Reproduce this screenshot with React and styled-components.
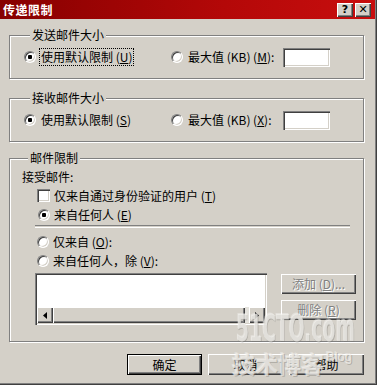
import React from 'react';
import styled, { createGlobalStyle } from 'styled-components';

const GlobalStyle = createGlobalStyle`
  html, body { margin: 0; padding: 0; background: #d4d0c8; }
  body {
    font-family: "Noto Sans CJK SC", "Noto Sans", sans-serif;
    font-size: 12px;
    line-height: 14px;
    color: #000;
  }
`;

const Window = styled.div`
  position: relative;
  width: 377px;
  height: 385px;
  box-sizing: border-box;
  background: #d4d0c8;
  padding-right: 2px;
  padding-bottom: 2px;
  box-shadow: inset -1px -1px 0 #404040, inset -2px -2px 0 #808080;
  overflow: hidden;
`;

const TitleBar = styled.div`
  height: 19px;
  display: flex;
  align-items: center;
  justify-content: space-between;
  padding: 0 4px 0 3px;
  background: linear-gradient(to right, #860000, #b40808 60%, #c80e0e);
`;

const Title = styled.div`
  color: #fff;
  font-weight: bold;
  font-size: 12px;
  letter-spacing: 0.5px;
`;

const TitleButtons = styled.div`
  display: flex;
  gap: 2px;
`;

const TitleButton = styled.div`
  width: 16px;
  height: 14px;
  box-sizing: border-box;
  background: #d4d0c8;
  box-shadow: inset 1px 1px 0 #fff, inset -1px -1px 0 #404040, inset -2px -2px 0 #808080;
  display: flex;
  align-items: center;
  justify-content: center;
  font-family: "DejaVu Sans", sans-serif;
  font-weight: bold;
  font-size: 11px;
  line-height: 1;
`;

const Body = styled.div`
  padding: 16px 11px 0 9px;
`;

const GroupBox = styled.div`
  border: 1px solid #808080;
  box-shadow: inset 1px 1px 0 #fff, 1px 1px 0 #fff;
  margin-top: ${p => p.$mt || 0}px;
  padding: 0 ${p => p.$pr || 0}px ${p => p.$pb}px ${p => p.$pl}px;
`;

const Legend = styled.div`
  width: fit-content;
  margin: -8px 0 0 ${p => p.$ml}px;
  padding: 0 2px;
  height: 14px;
  background: #d4d0c8;
`;

const Row = styled.div`
  display: flex;
  align-items: center;
  height: 20px;
  margin-top: 5px;
`;

const Option = styled.div`
  display: flex;
  align-items: center;
  gap: 4px;
  width: ${p => (p.$w ? `${p.$w}px` : 'auto')};
  height: 19px;
  flex-shrink: 0;
`;

const Label = styled.span`
  white-space: nowrap;
  padding: 1px 1px;
  outline: ${p => (p.$focus ? '1px dotted #000' : 'none')};
`;

const RadioCircle = styled.span`
  width: 12px;
  height: 12px;
  box-sizing: border-box;
  border-radius: 50%;
  border: 1px solid;
  border-color: #808080 #fff #fff #808080;
  box-shadow: inset 1px 1px 0 #404040, inset -1px -1px 0 #d4d0c8;
  background: ${p => (p.$checked ? 'radial-gradient(circle, #000 0 2px, #fff 2.5px)' : '#fff')};
  flex-shrink: 0;
`;

const CheckBox = styled.span`
  width: 13px;
  height: 13px;
  box-sizing: border-box;
  background: #fff;
  box-shadow: inset 1px 1px 0 #808080, inset 2px 2px 0 #404040, inset -1px -1px 0 #fff, inset -2px -2px 0 #d4d0c8;
  flex-shrink: 0;
`;

const TextBox = styled.div`
  width: 47px;
  height: 19px;
  background: #fff;
  box-shadow: inset 1px 1px 0 #808080, inset 2px 2px 0 #404040, inset -1px -1px 0 #fff, inset -2px -2px 0 #d4d0c8;
`;

const Caption = styled.div`
  height: 14px;
  margin-top: 5px;
`;

const Indent = styled.div`
  padding-left: 13px;
  margin-top: 2px;
`;

const CheckRow = styled.div`
  display: flex;
  align-items: center;
  gap: 4px;
  height: 19px;
  padding-left: ${p => p.$pl || 2}px;
`;

const Separator = styled.div`
  height: 1px;
  border-top: 1px solid #808080;
  border-bottom: 1px solid #fff;
  margin: 1px 6px 4px 0;
`;

const ListRow = styled.div`
  display: flex;
  justify-content: space-between;
  margin-top: 3px;
`;

const ListBox = styled.div`
  width: 232px;
  height: 52px;
  box-sizing: border-box;
  padding: 2px;
  background: #fff;
  box-shadow: inset 1px 1px 0 #808080, inset 2px 2px 0 #404040, inset -1px -1px 0 #fff, inset -2px -2px 0 #d4d0c8;
  display: flex;
  flex-direction: column;
  justify-content: flex-end;
`;

const ScrollBar = styled.div`
  display: flex;
  height: 16px;
  background: #e4e2dc;
`;

const RaisedPart = styled.div`
  width: ${p => (p.$w ? `${p.$w}px` : 'auto')};
  flex: ${p => (p.$w ? '0 0 auto' : '1')};
  margin-right: ${p => p.$mr || 0}px;
  background: #d4d0c8;
  box-shadow: inset 1px 1px 0 #fff, inset -1px -1px 0 #404040, inset -2px -2px 0 #808080;
  display: flex;
  align-items: center;
  justify-content: center;
`;

const SideButtons = styled.div`
  display: flex;
  flex-direction: column;
  gap: 6px;
  margin-top: 1px;
`;

const Button = styled.div`
  width: 75px;
  height: ${p => p.$h || 20}px;
  box-sizing: border-box;
  background: #d4d0c8;
  box-shadow: ${p =>
    p.$default
      ? 'inset 0 0 0 1px #000, inset 2px 2px 0 #fff, inset -2px -2px 0 #404040, inset -3px -3px 0 #808080'
      : 'inset 1px 1px 0 #fff, inset -1px -1px 0 #404040, inset -2px -2px 0 #808080'};
  display: flex;
  align-items: center;
  justify-content: center;
  white-space: nowrap;
  color: ${p => (p.$disabled ? '#808080' : '#000')};
  text-shadow: ${p => (p.$disabled ? '1px 1px 0 #fff' : 'none')};
`;

const Footer = styled.div`
  display: flex;
  justify-content: flex-end;
  gap: 6px;
  margin-top: 12px;
`;

/* 51CTO watermark stamped over the lower-right corner */
const Watermark = styled.div`
  position: absolute;
  left: 236px;
  top: 310px;
  width: 132px;
  pointer-events: none;
  color: rgba(240, 238, 234, 0.72);
  text-shadow: 1px 1px 0 rgba(120, 118, 112, 0.4), -1px -1px 0 rgba(255, 255, 255, 0.35);
`;

const WmBig = styled.div`
  font-family: "Liberation Sans Narrow", "DejaVu Sans Condensed", sans-serif;
  font-size: 38px;
  font-weight: bold;
  line-height: 36px;
  white-space: nowrap;
  transform: scaleX(0.55);
  transform-origin: left center;
`;

const WmSmall = styled.div`
  display: flex;
  align-items: flex-start;
  gap: 2px;
  margin: 4px 0 0 -4px;
  font-size: 23px;
  line-height: 26px;
  font-weight: bold;
  white-space: nowrap;
  span {
    font-family: "Liberation Sans", sans-serif;
    font-size: 13px;
    line-height: 14px;
    font-weight: normal;
  }
`;

const Tri = ({ dir }) => (
  <svg width="4" height="7" viewBox="0 0 4 7">
    {dir === 'left' ? <path d="M4 0 L0 3.5 L4 7 Z" fill="#000" /> : <path d="M0 0 L4 3.5 L0 7 Z" fill="#000" />}
  </svg>
);

const Radio = ({ checked, children, w, focus }) => (
  <Option $w={w}>
    <RadioCircle $checked={checked} />
    <Label $focus={focus}>{children}</Label>
  </Option>
);

export default function App() {
  return (
    <>
      <GlobalStyle />
      <Window>
        <TitleBar>
          <Title>传递限制</Title>
          <TitleButtons>
            <TitleButton>?</TitleButton>
            <TitleButton>✕</TitleButton>
          </TitleButtons>
        </TitleBar>
        <Body>
          <GroupBox $pl={14} $pb={11}>
            <Legend $ml={6}>发送邮件大小</Legend>
            <Row>
              <Radio checked w={147} focus>使用默认限制 (<u>U</u>)</Radio>
              <Radio w={112}>最大值 (KB) (<u>M</u>):</Radio>
              <TextBox />
            </Row>
          </GroupBox>

          <GroupBox $pl={14} $pb={11} $mt={19}>
            <Legend $ml={6}>接收邮件大小</Legend>
            <Row>
              <Radio checked w={147}>使用默认限制 (<u>S</u>)</Radio>
              <Radio w={112}>最大值 (KB) (<u>X</u>):</Radio>
              <TextBox />
            </Row>
          </GroupBox>

          <GroupBox $pl={12} $pr={7} $pb={16} $mt={16}>
            <Legend $ml={6}>邮件限制</Legend>
            <Caption>接受邮件:</Caption>
            <Indent>
              <CheckRow>
                <CheckBox />
                <span>仅来自通过身份验证的用户 (<u>T</u>)</span>
              </CheckRow>
              <CheckRow $pl={3}>
                <RadioCircle $checked />
                <span>来自任何人 (<u>E</u>)</span>
              </CheckRow>
              <Separator />
              <CheckRow $pl={2}>
                <RadioCircle />
                <span>仅来自 (<u>O</u>):</span>
              </CheckRow>
              <CheckRow $pl={2}>
                <RadioCircle />
                <span>来自任何人，除 (<u>V</u>):</span>
              </CheckRow>
              <ListRow>
                <ListBox>
                  <ScrollBar>
                    <RaisedPart $w={16}><Tri dir="left" /></RaisedPart>
                    <RaisedPart $mr={4} />
                    <RaisedPart $w={16}><Tri dir="right" /></RaisedPart>
                  </ScrollBar>
                </ListBox>
                <SideButtons>
                  <Button $disabled>添加 (<u>D</u>)...</Button>
                  <Button $disabled>删除 (<u>R</u>)</Button>
                </SideButtons>
              </ListRow>
            </Indent>
          </GroupBox>

          <Footer>
            <Button $default $h={21}>确定</Button>
            <Button $h={21}>取消</Button>
            <Button $h={21}>帮助</Button>
          </Footer>
        </Body>
        <Watermark>
          <WmBig>51CTO.com</WmBig>
          <WmSmall>技术博客<span>Blog</span></WmSmall>
        </Watermark>
      </Window>
    </>
  );
}
